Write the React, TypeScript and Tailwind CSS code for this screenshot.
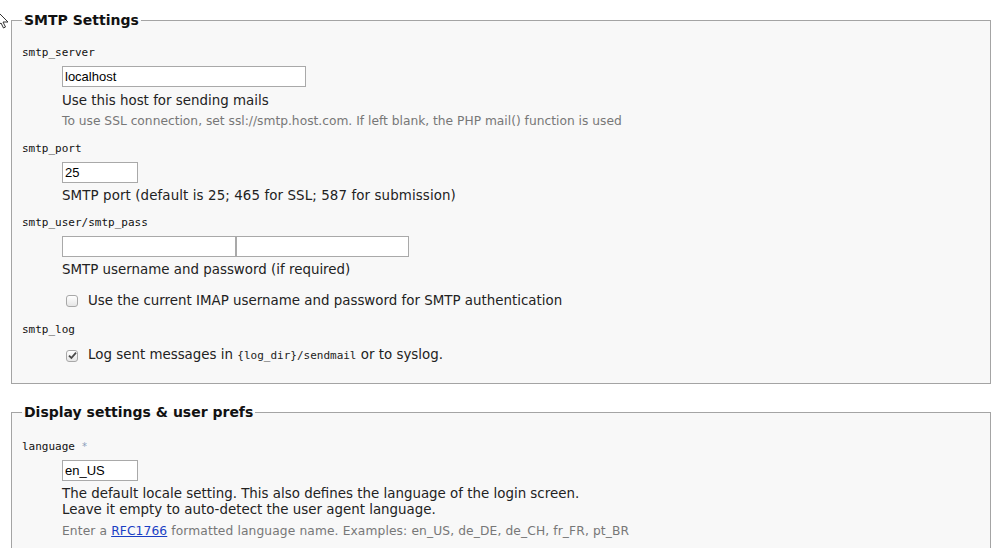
import React from 'react';

const sans = { fontFamily: '"DejaVu Sans", Verdana, sans-serif' };

function Label({ children }: { children: React.ReactNode }) {
  return (
    <dt className="font-['DejaVu_Sans_Mono',monospace] text-[11px] leading-[16px] text-[#111]">
      {children}
    </dt>
  );
}

function TextInput({ value = '', width }: { value?: string; width: string }) {
  return (
    <input
      readOnly
      value={value}
      className={`${width} block h-[21px] border border-[#a9a9a9] bg-white px-[2px] font-['Liberation_Sans',Arial,sans-serif] text-[13px] text-black outline-none`}
    />
  );
}

function Check({ checked }: { checked?: boolean }) {
  return (
    <span className="mr-[10px] ml-[4px] inline-flex h-[12px] w-[12px] shrink-0 items-center justify-center rounded-[3px] border border-[#a8a8a8] bg-gradient-to-b from-white to-[#e6e6e6]">
      {checked && (
        <svg width="9" height="9" viewBox="0 0 9 9">
          <path d="M1 4.6 L3.4 7 L8 1.6" fill="none" stroke="#4a4a4a" strokeWidth="1.8" />
        </svg>
      )}
    </span>
  );
}

export default function App() {
  return (
    <div className="relative min-h-[548px] bg-white pl-[11px] pr-[16px] text-[#222]" style={sans}>
      <svg className="absolute left-0 top-0" width="10" height="20" viewBox="0 0 10 20">
        <path d="M-4 0 L8 12 L3 12 L5.5 17 L3.5 18 L1 13 L-4 17 Z" fill="#fff" stroke="#333" strokeWidth="1" />
      </svg>

      <fieldset className="mt-[10px] border border-[#a4a4a4] bg-[#f8f8f8] pb-[19px] pl-[10px]">
        <legend className="px-[2px] text-[14px] font-bold leading-[20px] text-[#111]">SMTP Settings</legend>
        <dl className="mt-[15px]">
          <Label>smtp_server</Label>
          <dd className="ml-[40px] mt-[5px]">
            <TextInput value="localhost" width="w-[244px]" />
            <div className="mt-[6px] text-[13.4px] leading-[16px]">Use this host for sending mails</div>
            <p className="text-[12.25px] leading-[24px] text-[#777]">
              To use SSL connection, set ssl://smtp.host.com. If left blank, the PHP mail() function is used
            </p>
          </dd>

          <Label><span className="mt-[8px] block">smtp_port</span></Label>
          <dd className="ml-[40px] mt-[5px]">
            <TextInput value="25" width="w-[76px]" />
            <div className="mt-[5px] text-[13.4px] leading-[16px] tracking-[0.1px]">
              SMTP port (default is 25; 465 for SSL; 587 for submission)
            </div>
          </dd>

          <Label><span className="mt-[11px] block">smtp_user/smtp_pass</span></Label>
          <dd className="ml-[40px] mt-[5px]">
            <div className="flex">
              <TextInput width="w-[174px]" />
              <TextInput width="w-[173px]" />
            </div>
            <div className="mt-[5px] text-[13.4px] leading-[16px]">SMTP username and password (if required)</div>
            <div className="mt-[15px] flex items-center text-[13.4px] leading-[16px]">
              <Check />
              Use the current IMAP username and password for SMTP authentication
            </div>
          </dd>

          <Label><span className="mt-[13px] block">smtp_log</span></Label>
          <dd className="ml-[40px] mt-[9px]">
            <div className="flex items-center text-[13.4px] leading-[16px]">
              <Check checked />
              <span>
                Log sent messages in{' '}
                <span className="font-['DejaVu_Sans_Mono',monospace] text-[11px]">{'{log_dir}'}/sendmail</span> or to
                syslog.
              </span>
            </div>
          </dd>
        </dl>
      </fieldset>

      <fieldset className="mt-[18px] border border-[#a4a4a4] bg-[#f8f8f8] pb-[18px] pl-[10px]">
        <legend className="px-[2px] text-[14px] font-bold leading-[20px] text-[#111]">
          Display settings &amp; user prefs
        </legend>
        <dl className="mt-[17px]">
          <Label>
            language <span className="align-top text-[10px] text-[#8aa0bb]">*</span>
          </Label>
          <dd className="ml-[40px] mt-[5px]">
            <TextInput value="en_US" width="w-[76px]" />
            <div className="mt-[5px] text-[13.4px] leading-[16px]">
              The default locale setting. This also defines the language of the login screen.
              <br />
              Leave it empty to auto-detect the user agent language.
            </div>
            <p className="mt-[1px] text-[12.25px] leading-[24px] tracking-[0.12px] text-[#777]">
              Enter a{' '}
              <a href="#" className="text-[#1a3fc4] underline">
                RFC1766
              </a>{' '}
              formatted language name. Examples: en_US, de_DE, de_CH, fr_FR, pt_BR
            </p>
          </dd>
        </dl>
      </fieldset>
    </div>
  );
}
